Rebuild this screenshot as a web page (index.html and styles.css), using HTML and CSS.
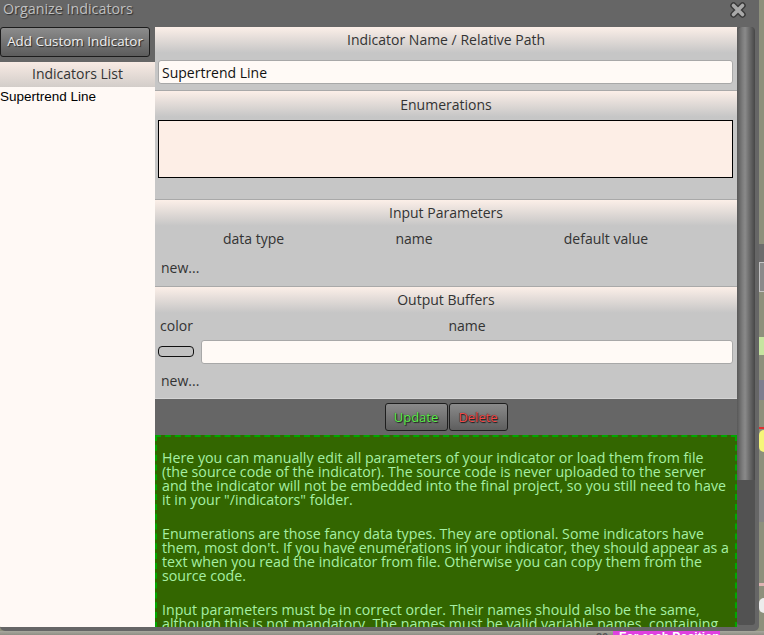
FILE: index.html
```html
<!DOCTYPE html>
<html>
<head>
<meta charset="utf-8">
<title>Organize Indicators</title>
<link rel="stylesheet" href="styles.css">
</head>
<body>
<div class="app">
  <div class="app-side app-dark"></div>
  <div class="app-side app-ebox"></div>
  <div class="app-side app-green"></div>
  <div class="app-side app-lav"></div>
  <div class="app-side app-red"></div>
  <div class="app-side app-yellow"></div>
  <div class="app-side app-gray"></div>
  <div class="app-side app-pink"></div>
  <div class="app-side app-white"></div>
  <div class="app-bottom"></div>
  <div class="app-num">20</div>
  <div class="app-tag">For each Position</div>
</div>

<div class="dialog">
  <div class="titlebar">
    <span class="title">Organize Indicators</span>
    <svg class="close" width="18" height="18" viewBox="0 0 18 18">
      <path d="M4.5 4.5L13.5 13.5M13.5 4.5L4.5 13.5" stroke="#3a3a3a" stroke-width="6.5" stroke-linecap="round"/>
      <path d="M4.5 4.5L13.5 13.5M13.5 4.5L4.5 13.5" stroke="#a9a9a9" stroke-width="3.6" stroke-linecap="round"/>
    </svg>
  </div>
  <div class="content">
    <div class="left">
      <div class="addbar"><button class="addbtn">Add Custom Indicator</button></div>
      <div class="lhead">Indicators List</div>
      <div class="list"><div class="item">Supertrend Line</div></div>
    </div>
    <div class="main">
      <div class="pane">
        <div class="section s1">
          <div class="shead">Indicator Name / Relative Path</div>
          <input class="field name-field" type="text" value="Supertrend Line">
        </div>
        <div class="section s2">
          <div class="shead">Enumerations</div>
          <div class="enum"></div>
        </div>
        <div class="section s3">
          <div class="shead">Input Parameters</div>
          <div class="cols">
            <span>data type</span><span>name</span><span>default value</span>
          </div>
          <div class="newrow newrow-in">new...</div>
        </div>
        <div class="section s4">
          <div class="shead">Output Buffers</div>
          <div class="outgrid">
            <span class="olabel">color</span><span class="olabel olabel-name">name</span>
            <span class="swatch"></span><input class="field buf-field" type="text" value="">
          </div>
          <div class="newrow newrow-out">new...</div>
        </div>
        <div class="btnbar">
          <button class="act upd">Update</button><button class="act del">Delete</button>
        </div>
        <div class="help">
          <p>Here you can manually edit all parameters of your indicator or load them from file<br>(the source code of the indicator). The source code is never uploaded to the server<br>and the indicator will not be embedded into the final project, so you still need to have<br>it in your "/indicators" folder.</p>
          <p>Enumerations are those fancy data types. They are optional. Some indicators have<br>them, most don't. If you have enumerations in your indicator, they should appear as a<br>text when you read the indicator from file. Otherwise you can copy them from the<br>source code.</p>
          <p>Input parameters must be in correct order. Their names should also be the same,<br>although this is not mandatory. The names must be valid variable names, containing<br>only letters, digits and underscores.</p>
        </div>
      </div>
      <div class="scrollbar"><div class="thumb"></div></div>
    </div>
  </div>
</div>
</body>
</html>
```
FILE: styles.css
```css
* { box-sizing: border-box; }
html, body { margin: 0; padding: 0; }
body {
  width: 764px;
  height: 635px;
  overflow: hidden;
  position: relative;
  background: #8d907c;
  font-family: "Open Sans", "Noto Sans", sans-serif;
}

/* background application peeking out */
.app-side { position: absolute; left: 759px; width: 10px; }
.app-dark { top: 244px; height: 18px; background: #6c6c6c; }
.app-ebox { top: 262px; height: 30px; background: #8a8a8a; border: 1px solid #c4c4c4; }
.app-green { top: 337px; height: 18px; background: #c6e4a0; }
.app-lav { top: 380px; height: 20px; background: #7e7e8e; }
.app-red { top: 427px; height: 2px; background: #e03030; }
.app-yellow { top: 430px; height: 22px; background: #f6f67a; border-radius: 11px; }
.app-gray { top: 490px; height: 32px; background: #858585; }
.app-pink { top: 583px; height: 3px; background: #e0b4b4; }
.app-white { top: 598px; height: 15px; background: #ececec; border-radius: 8px; }
.app-bottom { position: absolute; left: 0; top: 631px; width: 764px; height: 4px; background: linear-gradient(#a8a89e, #8e8e84); }
.app-num { position: absolute; left: 596px; top: 631px; font: bold 11px/12px "Liberation Sans", sans-serif; color: #555; }
.app-tag {
  position: absolute; left: 613px; top: 629px; width: 107px; height: 16px;
  background: #e040e0; color: #fff; border-radius: 2px;
  font: bold 12px/16px "Liberation Sans", sans-serif; padding-left: 6px;
  white-space: nowrap; overflow: hidden;
}

/* dialog window */
.dialog {
  position: absolute; left: 0; top: 0;
  width: 759px; height: 631px;
  background: #666;
  border-radius: 0 0 5px 5px;
  display: flex; flex-direction: column;
  overflow: hidden;
}
.titlebar {
  height: 27px; flex: none;
  display: flex; align-items: center;
  padding: 0 12px 0 3px;
}
.title {
  color: #c0c0c0; font-size: 14.3px; line-height: 18px;
  text-shadow: 1px 1px 1px #2e2e2e;
  margin-top: -9px;
}
.close { margin-left: auto; margin-top: -7px; }

.content { display: flex; height: 600px; flex: none; }

.left { width: 155px; display: flex; flex-direction: column; }
.addbar { height: 35px; flex: none; }
.addbtn {
  display: block; width: 150px; height: 30px; margin: 0; padding: 0 0 2px 0;
  background: linear-gradient(#8c8c8c, #5c5c5c);
  border: 1px solid #1c1c1c; border-radius: 3px;
  color: #f0f0f0; font-family: "Open Sans", "Noto Sans", sans-serif; font-size: 13.4px;
  text-shadow: 1px 1px 1px #262626;
}
.lhead {
  height: 25px; line-height: 24px; flex: none;
  text-align: center; font-size: 14px; color: #333;
  background: linear-gradient(#f8ebe4, #d3cdc9);
}
.list { flex: 1; background: #fff9f5; }
.item {
  font-family: "Liberation Sans", Arial, sans-serif; font-size: 13.5px; line-height: 20px;
  color: #000; white-space: nowrap;
}

.main { display: flex; width: 604px; padding-right: 4px; }
.pane { width: 582px; overflow: hidden; display: flex; flex-direction: column; }

.section { background: #c6c6c6; border-bottom: 1px solid #a9a9a9; padding: 0 4px 0 3px; flex: none; }
.shead {
  height: 28px; line-height: 26px; margin: 0 -4px 0 -3px;
  text-align: center; font-size: 14px; color: #333;
  background: linear-gradient(#fcefe8, #c6c6c6 92%);
}
.s2 .shead { line-height: 27px; }
.field {
  display: block; width: 100%; height: 24px; margin: 0;
  background: #fffaf6; border: 1px solid #a8a8a8; border-radius: 3px;
  padding: 0 3px; outline: none;
  font-family: "Open Sans", "Noto Sans", sans-serif; font-size: 14px; color: #111;
}
.s1 .name-field { margin-top: 5px; }
.s1 { padding-bottom: 6px; }
.enum { height: 58px; margin-top: 1px; background: #fdeee6; border: 1px solid #000; }
.s2 { padding-bottom: 21px; }
.cols {
  display: grid; grid-template-columns: 191px 130px 1fr;
  margin-top: 1px; height: 20px; line-height: 20px;
  text-align: center; font-size: 14px; color: #333;
}
.newrow { height: 20px; line-height: 20px; padding-left: 3px; font-size: 14px; color: #333; }
.newrow-in { margin-top: 9px; }
.s3 { padding-bottom: 8px; }
.outgrid {
  display: grid; grid-template-columns: 37px 1fr; column-gap: 6px;
  grid-template-rows: 20px 24px; row-gap: 4px;
  margin-top: 1px;
}
.olabel { font-size: 14px; line-height: 20px; color: #333; text-align: center; }
.swatch {
  align-self: center; width: 36px; height: 11px; margin-top: -2px;
  background: #c2c2c2; border: 1px solid #111; border-radius: 4px;
}
.newrow-out { margin-top: 7px; }
.s4 { padding-bottom: 7px; border-bottom-color: #d4d4d4; }

.btnbar { height: 36px; flex: none; display: flex; justify-content: center; gap: 1px; padding-top: 4px; }
.act {
  height: 28px; margin: 0; padding: 0 0 1px 0;
  background: linear-gradient(#8a8a8a, #5e5e5e);
  border: 1px solid #1e1e1e; border-radius: 3px;
  font-family: "Open Sans", "Noto Sans", sans-serif; font-size: 13px;
  text-shadow: 1px 1px 1px #1a1a1a, 0 0 1px #222;
}
.upd { width: 63px; color: #5ff04e; }
.del { width: 59px; color: #f24848; }

.help {
  flex: none;
  background: #336600; border: 2px dashed #00a800;
  padding: 14px 2px 20px 5px;
  color: #a6f0a4; font-size: 14.2px; line-height: 14px;
}
.help p { margin: 0 0 20px 0; white-space: nowrap; }

.scrollbar { width: 18px; background: #525252; border-radius: 4px 4px 3px 3px; margin-bottom: 2px; }
.thumb {
  height: 453px; border-radius: 5px 5px 0 0;
  background: linear-gradient(to right, #585858, #7c7c7c 30%, #8a8a8a 45%, #6a6a6a 70%, #474747);
}
```
